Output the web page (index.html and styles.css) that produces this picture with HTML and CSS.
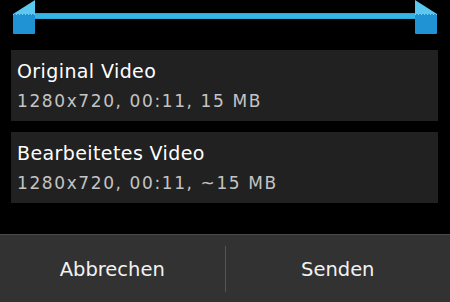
FILE: index.html
```html
<!DOCTYPE html>
<html lang="de">
<head>
    <meta charset="UTF-8">
    <meta name="viewport" content="width=device-width, initial-scale=1.0">
    <link rel="stylesheet" href="styles.css">
    <title>Video senden</title>
</head>
<body>
    <div class="dialog">
        <div class="trim">
            <svg class="handle" width="22" height="34" viewBox="0 0 22 34">
                <polygon points="22,0 22,14 0,14" fill="#5ac8ef"/>
                <rect x="0" y="14" width="22" height="20" rx="1" fill="#1f93d3"/>
                <line x1="0" y1="14.5" x2="22" y2="14.5" stroke="#7fd3f2" stroke-width="1" stroke-dasharray="1 2"/>
            </svg>
            <div class="track"></div>
            <svg class="handle" width="22" height="34" viewBox="0 0 22 34">
                <polygon points="0,0 0,14 22,14" fill="#5ac8ef"/>
                <rect x="0" y="14" width="22" height="20" rx="1" fill="#1f93d3"/>
                <line x1="0" y1="14.5" x2="22" y2="14.5" stroke="#7fd3f2" stroke-width="1" stroke-dasharray="1 2"/>
            </svg>
        </div>

        <div class="options">
            <div class="option">
                <div class="title">Original Video</div>
                <div class="info">1280x720, 00:11, 15 MB</div>
            </div>
            <div class="option">
                <div class="title">Bearbeitetes Video</div>
                <div class="info">1280x720, 00:11, ~15 MB</div>
            </div>
        </div>

        <div class="buttons">
            <div class="btn">Abbrechen</div>
            <div class="sep"></div>
            <div class="btn">Senden</div>
        </div>
    </div>
</body>
</html>
```

FILE: styles.css
```css
* {
    margin: 0;
    padding: 0;
    box-sizing: border-box;
}
body {
    background-color: #000;
    font-family: "DejaVu Sans", sans-serif;
    width: 450px;
    height: 302px;
    overflow: hidden;
}
.dialog {
    display: flex;
    flex-direction: column;
    height: 302px;
}
.trim {
    display: flex;
    padding: 0 13px;
    height: 34px;
}
.handle {
    display: block;
    flex-shrink: 0;
}
.track {
    flex: 1;
    height: 6px;
    margin-top: 13px;
    background-color: #33b5e5;
    border-top: 1px solid #2ea6d6;
    border-bottom: 1px solid #2ea6d6;
}
.options {
    display: flex;
    flex-direction: column;
    gap: 11px;
    padding: 16px 12px 0 11px;
}
.option {
    height: 71px;
    background-color: #212121;
    padding: 9px 0 0 6px;
}
.title {
    color: #fff;
    font-size: 19px;
    line-height: 24px;
    letter-spacing: 0.4px;
}
.info {
    color: #c4c4c4;
    font-size: 17px;
    line-height: 24px;
    letter-spacing: 1.6px;
    padding-top: 6px;
}
.buttons {
    margin-top: auto;
    height: 68px;
    display: flex;
    align-items: center;
    background-color: #323232;
    border-top: 1px solid #4b4b4b;
}
.btn {
    flex: 1;
    text-align: center;
    color: #f2f2f2;
    font-size: 19.5px;
    padding-top: 2px;
}
.sep {
    width: 1px;
    height: 46px;
    margin-top: 1px;
    background-color: #555;
}
```
